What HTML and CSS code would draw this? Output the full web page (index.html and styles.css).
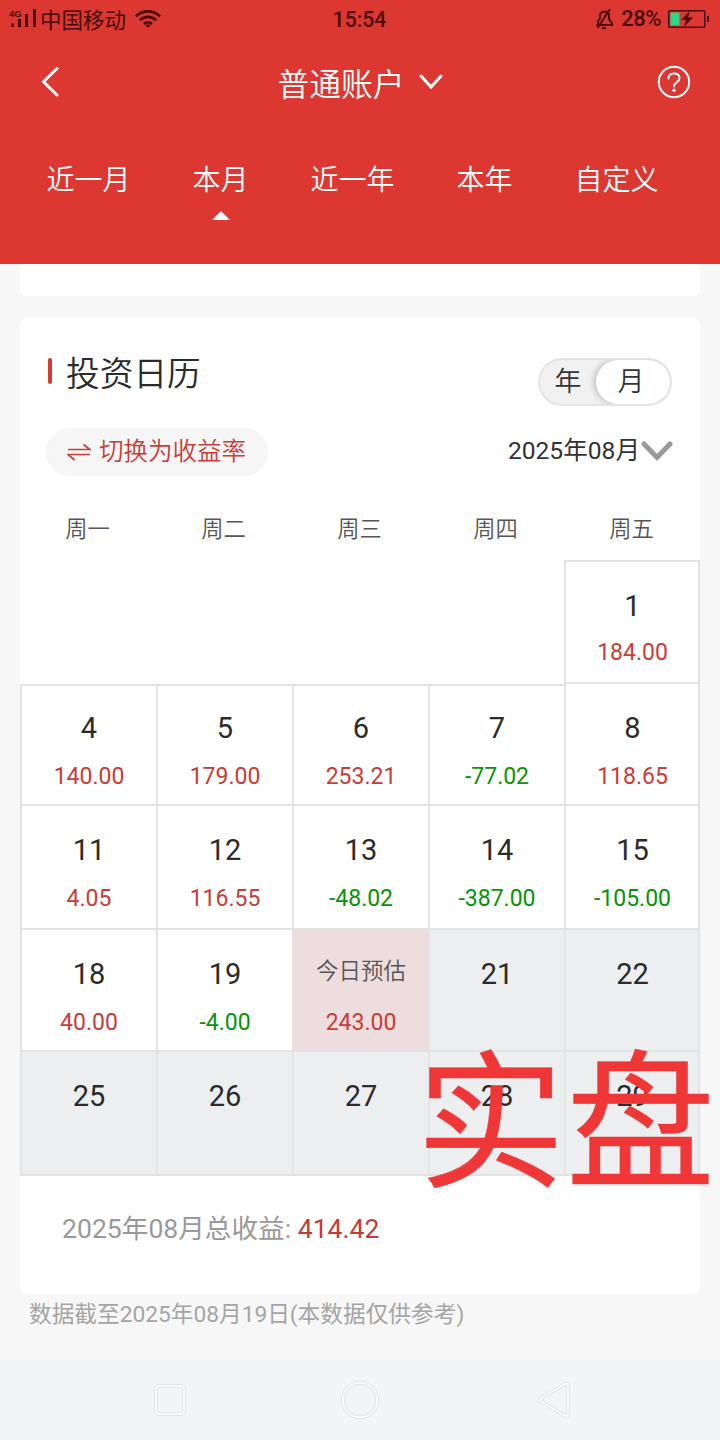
FILE: index.html
```html
<!DOCTYPE html>
<html lang="zh-CN">
<head>
<meta charset="utf-8">
<title>投资日历</title>
<link rel="stylesheet" href="styles.css">
</head>
<body>
<div class="screen">
  <header class="header">
    <div class="status">
      <div class="status-left">
        <svg class="signal" width="28" height="20" viewBox="0 0 28 20"><text class="net" x="0" y="7.5">4G</text><path d="M2 14.5h3V18H2zM9 10h3v8H9zM16 5h3v13h-3zM24 0h3v18h-3z"/></svg>
        <span class="carrier">中国移动</span>
        <svg class="wifi" width="26" height="20" viewBox="0 0 26 20" fill="none" stroke-width="2.6"><path d="M1 7.3a17 17 0 0 1 24 0M5 11.2a11.4 11.4 0 0 1 16 0M9 15a5.8 5.8 0 0 1 8 0"/><path class="dot" d="M10.5 16.3q2.5-1.8 5 0L13 19z"/></svg>
      </div>
      <span class="clock">15:54</span>
      <div class="status-right">
        <svg width="19" height="20" viewBox="0 0 19 20" fill="none" stroke-width="2"><path d="M1 16h17M3 15V12L5 9.500V7q0-4 4.500-4.500Q14 3 14 7v3l3 4.500v1.500M7 19h4M15 0L2.500 19"/></svg>
        <span class="percent">28%</span>
        <svg width="41" height="20" viewBox="0 0 41 20"><rect class="outline" x=".75" y="1.75" width="36" height="16.500" rx="1"/><path class="charge" d="M2.500 3.500h9v13h-9z"/><path d="M22 2l-9 9h5l-2 7 9-9.500h-5zM39 7h2v6h-2z"/></svg>
      </div>
    </div>
    <div class="nav">
      <svg class="back" width="20" height="32" viewBox="0 0 20 32"><path d="M18 2.500L4.500 15.800 18 29"/></svg>
      <div class="account"><span>普通账户</span><svg width="24" height="18" viewBox="0 0 24 18"><path d="M2 3l10 11L22 3"/></svg></div>
      <svg class="help" width="34" height="34" viewBox="0 0 34 34"><circle cx="17" cy="17" r="15.200"/><path d="M11.500 13.500q0-5 5.500-5t5.500 4.500q0 2.500-2.700 4.200-2.800 1.800-2.800 4.300"/><circle class="point" cx="17" cy="25.200" r="1.700"/></svg>
    </div>
    <nav class="tabs">
      <span class="tab">近一月</span><span class="tab active">本月</span><span class="tab">近一年</span><span class="tab">本年</span><span class="tab">自定义</span>
    </nav>
  </header>
  <main class="content">
    <section class="previous"></section>
    <section class="card">
      <div class="card-head">
        <h1 class="title">投资日历</h1>
        <div class="toggle"><span class="year">年</span><span class="month">月</span></div>
      </div>
      <div class="controls">
        <div class="switch"><svg width="24" height="18" viewBox="0 0 24 18"><path d="M1 6.500h22l-6.500-5M23 11.500H1l6.500 5.500"/></svg><span>切换为收益率</span></div>
        <div class="period"><span>2025年08月</span><svg width="32" height="22" viewBox="0 0 32 22"><path d="M3 4l13 13.500L29 4"/></svg></div>
      </div>
      <div class="weekdays"><span>周一</span><span>周二</span><span>周三</span><span>周四</span><span>周五</span></div>
      <div class="calendar">
        <div class="cell first"><b>1</b><i>184.00</i></div>
        <div class="cell second"><b>4</b><i>140.00</i></div>
        <div class="cell second"><b>5</b><i>179.00</i></div>
        <div class="cell second"><b>6</b><i>253.21</i></div>
        <div class="cell second"><b>7</b><i class="loss">-77.02</i></div>
        <div class="cell end raised"><b>8</b><i>118.65</i></div>
        <div class="cell"><b>11</b><i>4.05</i></div>
        <div class="cell"><b>12</b><i>116.55</i></div>
        <div class="cell"><b>13</b><i class="loss">-48.02</i></div>
        <div class="cell"><b>14</b><i class="loss">-387.00</i></div>
        <div class="cell end"><b>15</b><i class="loss">-105.00</i></div>
        <div class="cell"><b>18</b><i>40.00</i></div>
        <div class="cell"><b>19</b><i class="loss">-4.00</i></div>
        <div class="cell today"><b>今日预估</b><i>243.00</i></div>
        <div class="cell future"><b>21</b></div>
        <div class="cell future end"><b>22</b></div>
        <div class="cell future"><b>25</b></div>
        <div class="cell future"><b>26</b></div>
        <div class="cell future"><b>27</b></div>
        <div class="cell future"><b>28</b></div>
        <div class="cell future end"><b>29</b></div>
        <div class="watermark">实盘</div>
      </div>
      <div class="total">2025年08月总收益: <strong>414.42</strong></div>
    </section>
    <p class="note">数据截至2025年08月19日(本数据仅供参考)</p>
  </main>
  <footer class="system">
    <svg width="34" height="40" viewBox="0 0 34 40"><g class="edge"><rect x="3" y="6" width="28" height="28" rx="3"/></g><g class="core"><rect x="3" y="6" width="28" height="28" rx="3"/></g></svg>
    <svg width="40" height="40" viewBox="0 0 40 40"><circle class="edge" cx="20" cy="20" r="17.200"/><circle class="core" cx="20" cy="20" r="17.200"/></svg>
    <svg width="34" height="40" viewBox="0 0 34 40"><path class="edge" d="M3 18Q1 19.500 3 21.500L27 35.500Q30 37 30 34V5.500Q30 2.500 27 4Z"/><path class="core" d="M3 18Q1 19.500 3 21.500L27 35.500Q30 37 30 34V5.500Q30 2.500 27 4Z"/></svg>
  </footer>
</div>
</body>
</html>
```
FILE: styles.css
```css
* { box-sizing: border-box; }
body { margin: 0; font-family: Roboto, "Noto Sans CJK SC", sans-serif; color: #333; }
svg { display: block; flex: none; }
.screen { width: 720px; height: 1440px; display: flex; flex-direction: column; background: #f7f7f7; overflow: hidden; }
.header { height: 264px; flex: none; background: #dc3730; color: #fff; }
.status { height: 38px; display: grid; grid-template-columns: 1fr auto 1fr; align-items: center; padding: 0 11px 0 9px; color: #4a0806; }
.status-left, .status-right { display: flex; align-items: center; }
.status-left { padding-bottom: 2px; }
.status-right { justify-content: flex-end; gap: 7px; padding-bottom: 2px; }
.signal { fill: #4a0806; }
.net { font: bold 9.5px "Liberation Sans", sans-serif; }
.carrier { font-size: 21.5px; line-height: 32px; margin: 5px 0 0 3px; }
.wifi { margin-left: 9px; stroke: #4a0806; }
.dot { fill: #4a0806; stroke: none; }
.clock { font-size: 21.2px; font-weight: 500; margin-left: 1px; }
.status-right svg { stroke: #4a0806; }
.status-right svg + span { font-size: 22px; font-weight: 500; letter-spacing: -.5px; margin-top: -1px; }
.status-right span + svg { stroke: none; fill: #4a0806; }
.outline { fill: none; stroke: #4a0806; stroke-width: 1.5; }
.charge { fill: #26d987; }
.nav { height: 88px; display: grid; grid-template-columns: 1fr auto 1fr; align-items: center; padding: 0 29px 0 39px; }
.nav path, .nav circle { fill: none; stroke: #fff; stroke-width: 3; stroke-linecap: round; }
.account { display: flex; align-items: center; gap: 14px; font-size: 31.8px; line-height: 46px; margin-right: 10px; font-weight: 350; }
.account span { margin-top: 5px; }
.help { justify-self: end; }
.nav .help path, .nav .help circle { stroke-width: 2; }
.nav .help .point { fill: #fff; stroke: none; }
.tabs { display: grid; grid-template-columns: repeat(5, 132px); padding: 33px 0 0 22.5px; font-size: 28px; line-height: 44px; text-align: center; font-weight: 350; }
.active::after { content: ""; display: block; width: 0; margin: 8px auto 0; border: 9px solid transparent; border-top: 0; border-bottom-color: #fff; }
.content { flex: 1; padding: 0 20px; }
.previous { height: 32px; background: #fff; border-radius: 0 0 7px 7px; }
.card { height: 976px; margin-top: 22px; background: #fff; border-radius: 7px; }
.card-head { height: 96px; padding: 0 28px; display: flex; justify-content: space-between; align-items: flex-start; }
.title { margin: 32px 0 0; display: flex; align-items: center; gap: 14px; font-size: 33.7px; line-height: 50px; font-weight: 350; color: #2b2b2b; }
.title::before { content: ""; width: 4px; height: 26px; background: #d23b36; border-radius: 2px; margin-top: -8px; }
.toggle { width: 134px; height: 48px; margin-top: 40px; border: 2px solid #e4e4e4; border-radius: 24px; display: flex; background: #f1f1f1; font-size: 27px; line-height: 44px; font-weight: 350; overflow: hidden; }
.year { width: 56px; text-align: center; }
.month { flex: 1; height: 44px; border-radius: 22px; background: #fff; text-align: center; padding-right: 4px; box-shadow: -2px 0 6px #bbb; }
.controls { display: flex; justify-content: space-between; padding: 14px 28px 0 26px; height: 82px; }
.switch { width: 222px; height: 48px; padding-left: 21px; display: flex; align-items: center; gap: 8px; background: #f6f6f6; border-radius: 24px; font-size: 24.5px; line-height: 36px; font-weight: 350; color: #c93c38; }
.switch svg { margin-top: -1px; }
.switch path { fill: none; stroke: #cc3d38; stroke-width: 1.7; }
.period { height: 40px; display: flex; align-items: center; font-size: 24.6px; }
.period span { margin-top: -1px; }
.period svg { margin: 5px -1px 0 1px; }
.period path { fill: none; stroke: #999; stroke-width: 5; stroke-linecap: round; }
.weekdays, .calendar { display: grid; grid-template-columns: repeat(5, 136px); }
.weekdays { height: 64px; padding-top: 16px; font-size: 22.3px; line-height: 34px; font-weight: 350; text-align: center; color: #555; }
.weekdays span { padding-right: 1px; }
.calendar { position: relative; grid-template-rows: 124px 120px 124px 122px 124px; border-bottom: 2px solid #e3e3e4; }
.cell { border-left: 2px solid #e3e3e4; border-top: 2px solid #e3e3e4; text-align: center; padding: 24px 0 0 0; }
.cell b { display: block; font-size: 29px; line-height: 40px; font-weight: 400; color: #2b2b2b; }
.cell i { display: block; font-size: 23px; line-height: 32px; font-style: normal; color: #c93c38; margin-top: 13px; }
.cell .loss { color: #079407; }
.cell.second { padding-top: 22px; }
.first { grid-column: 5; }
.first i { margin-top: 11px; }
.cell.first, .cell.end { border-right: 2px solid #e3e3e4; padding-left: 1px; }
.raised { margin-top: -2px; }
.future { background: #edeef0; }
.today { background: #eedddf; }
.today b { font-size: 22.5px; font-weight: 350; color: #555; line-height: 34px; padding-bottom: 6px; }
.watermark { position: absolute; left: 396px; top: 455px; font-size: 149px; line-height: 220px; letter-spacing: 1px; color: #ef3737; -webkit-text-stroke: .4px #ef3737; white-space: nowrap; }
.total { padding: 33px 42px 0; font-size: 26.6px; line-height: 40px; color: #999; }
.total strong { font-weight: 400; color: #c43c38; }
.note { margin: 4px 9px 0; font-size: 22.7px; line-height: 34px; color: #a5a5a5; }
.system { height: 80px; flex: none; display: flex; justify-content: space-between; align-items: center; padding: 0 148px 0 153px; background: #f3f4f6; }
.system circle { transform: translateX(-1px); }
.system svg { overflow: visible; }
.system svg:nth-child(2) { margin-right: 3px; }
.edge, .core { fill: none; stroke: #e3e4e6; stroke-width: 4; }
.core { stroke: #f8f9fa; stroke-width: 2; }
```
